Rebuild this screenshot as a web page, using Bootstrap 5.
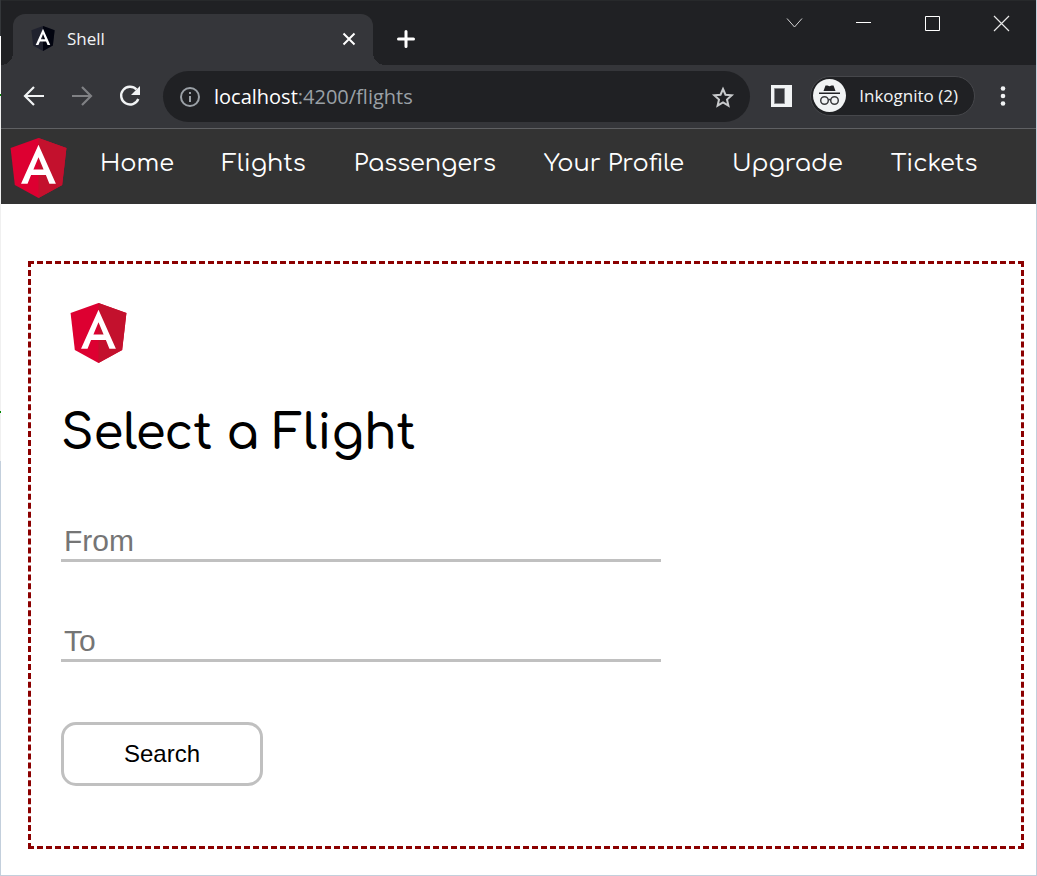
<!DOCTYPE html>
<html lang="en">
<head>
<meta charset="utf-8">
<meta name="viewport" content="width=device-width, initial-scale=1">
<title>Shell</title>
<link href="https://cdn.jsdelivr.net/npm/bootstrap@5.3.0/dist/css/bootstrap.min.css" rel="stylesheet">
<style>
  body { font-family: "Open Sans", sans-serif; background: #fff; color: #000; }
  svg { display: block; flex: none; }
  button { padding: 0; border: 0; background: none; color: #f1f3f4; }

  /* window frame: a thin edge all round, the desktop shows along the left side */
  .win {
    min-height: 100vh; padding: 0 1px 1px;
    background:
      linear-gradient(#34373a 36px, #fff 36px 94px, #080 94px 96px, #f0f0f0 96px 411px, #080 411px 413px, #f0f0f0 413px 461px, #c3cfdc 461px) left / 1px 100% no-repeat,
      #c3cfdc;
  }

  .tabstrip { height: 65px; background: #202124; border-top: 1px solid #27292b; padding-left: 12px; }
  .tab-shell { width: 360px; height: 51px; margin-top: 13px; padding: 0 17px 2px 18px; background: #35363a; border-radius: 12px 12px 0 0; color: #f1f3f4; font-size: 17px; line-height: 24px; }
  .tab-shell::before, .tab-shell::after { content: ""; position: absolute; bottom: 0; width: 12px; height: 12px; }
  .tab-shell::before { right: 100%; background: radial-gradient(circle at 0 0, #202124 12px, #35363a 12px); }
  .tab-shell::after { left: 100%; background: radial-gradient(circle at 100% 0, #202124 12px, #35363a 12px); }
  .new-tab { margin: 29px 0 0 24px; }
  .win-btns { gap: 48px; padding: 11px 24px 0 0; }

  .toolbar { height: 64px; background: #35363a; border-bottom: 1px solid #5f6063; padding: 0 27px 2px 21px; gap: 21px; }
  .history { gap: 24px; }
  .omnibox { height: 51px; border-radius: 26px; background: #202124; padding: 0 15px 0 16px; font-size: 20px; line-height: 28px; color: #fff; margin-top: 2px; }
  .omnibox label { margin-left: 13px; }
  .omnibox input { min-width: 0; padding: 0; border: 0; outline: 0; background: none; color: #9aa0a6; }
  .tools { gap: 18px; }
  .profile { height: 40px; border: 1px solid #46474b; border-radius: 20px; background: #202124; padding: 0 16px 0 2px; gap: 13px; font-size: 17px; line-height: 24px; }

  .site-nav { background: #333; min-height: 75px; }
  .site-links { font-family: "Comfortaa", "Noto Sans", sans-serif; font-size: 24px; line-height: 36px; gap: 48px; padding: 17px 0 0 24px; }
  .site-links a { color: #fff; text-decoration: none; white-space: nowrap; }

  .page { background: #fff; padding: 57px 12px 26px 27px; }
  .flight-box { border: 3px dashed #8b0000; padding: 30px 30px 60px; }
  .flight-box h1 { font-family: "Comfortaa", "Noto Sans", sans-serif; font-size: 48px; font-weight: 600; line-height: 64px; margin: 33px 0 56px; }
  .flight-box form { font-family: "Liberation Sans", sans-serif; gap: 60px; }
  .line-input { width: 600px; max-width: 100%; height: 40px; padding: 0 3px; border: 0; border-bottom: 3px solid #c0c0c0; border-radius: 0; outline: 0; font-size: 30px; line-height: 36px; }
  .line-input::placeholder { color: #757575; opacity: 1; }
  .search-btn { width: 202px; height: 64px; border: 3px solid #c0c0c0; border-radius: 15px; background: #fff; color: #000; font-size: 24px; line-height: 28px; }
</style>
</head>
<body>
<svg width="0" height="0" class="position-absolute" aria-hidden="true">
  <symbol id="shield-a" viewBox="0 0 250 250">
    <path fill="#fff" d="M125 52.1 66.8 182.6h21.7l11.7-29.2h49.4l11.7 29.2H183L125 52.1zm17 83.3h-34l17-40.9 17 40.9z"/>
  </symbol>
  <symbol id="angular" viewBox="0 0 250 250">
    <path fill="#dd0031" d="M125 30 31.9 63.2l14.2 123.1L125 230l78.9-43.7 14.2-123.1z"/>
    <path fill="#c3112d" d="M125 30v200l78.9-43.7 14.2-123.1z"/>
    <use href="#shield-a"/>
  </symbol>
</svg>

<div class="win d-flex flex-column">
  <header>
    <div class="tabstrip d-flex align-items-start">
      <div class="tab-shell position-relative d-flex align-items-center">
        <svg width="24" height="25" viewBox="31 30 188 200" aria-hidden="true"><path fill="#20222e" d="M125 30 31.9 63.2l14.2 123.1L125 230l78.9-43.7 14.2-123.1z"/><path fill="#02040f" d="M125 30v200l78.9-43.7 14.2-123.1z"/><path fill="#fff" d="M125 52.1 66.8 182.6h21.7l11.7-29.2h49.4l11.7 29.2H183L125 52.1zm17 83.3h-34l17-40.9 17 40.9z"/></svg>
        <span class="ms-2 ps-1 flex-grow-1">Shell</span>
        <button type="button" aria-label="Close tab"><svg width="14" height="14" viewBox="0 0 14 14" fill="none" stroke="#fff" stroke-width="2"><path d="m1.500 1.500 11 11m0-11-11 11"/></svg></button>
      </div>
      <button class="new-tab" type="button" aria-label="New tab"><svg width="18" height="18" viewBox="0 0 18 18" fill="none" stroke="#fff" stroke-width="3" stroke-linecap="round"><path d="M9 1.500v15M1.500 9h15"/></svg></button>
      <div class="win-btns d-flex ms-auto align-items-center">
        <button type="button" aria-label="Search tabs"><svg width="21" height="21" viewBox="0 0 21 21" fill="none" stroke="#d5d5d6"><path d="m3 6.500 7.500 8.500L18 6.500"/></svg></button>
        <button type="button" aria-label="Minimize"><svg width="21" height="21" viewBox="0 0 21 21" fill="none" stroke="#fff"><path d="M3 10.500h15"/></svg></button>
        <button type="button" aria-label="Maximize"><svg width="21" height="21" viewBox="0 0 21 21" fill="none" stroke="#fff"><path d="M3.500 4.500h14v14h-14z"/></svg></button>
        <button type="button" aria-label="Close"><svg width="21" height="21" viewBox="0 0 21 21" fill="none" stroke="#e8e8e8" stroke-width="1.200"><path d="m3 4 15 15M18 4 3 19"/></svg></button>
      </div>
    </div>

    <div class="toolbar d-flex align-items-center">
      <div class="history d-flex">
        <button type="button" aria-label="Back"><svg width="24" height="24" viewBox="0 0 24 24" fill="none" stroke="#f1f3f4" stroke-width="2.200"><path d="M22 12H3.500M12 3l-9 9 9 9"/></svg></button>
        <button type="button" aria-label="Forward"><svg width="24" height="24" viewBox="0 0 24 24" fill="none" stroke="#808184" stroke-width="2.200"><path d="M2 12h18.500M12 3l9 9-9 9"/></svg></button>
        <button type="button" aria-label="Reload"><svg width="24" height="24" viewBox="0 0 24 24"><path fill="none" stroke="#f1f3f4" stroke-width="2.400" d="M18.500 5.500A8.900 8.900 0 1 0 20.300 15"/><path fill="#f1f3f4" d="M22 2v9h-9z"/></svg></button>
      </div>
      <div class="omnibox d-flex align-items-center flex-grow-1">
        <svg width="22" height="22" viewBox="0 0 22 22" fill="none" stroke="#9aa0a6" stroke-width="2" aria-hidden="true"><circle cx="11" cy="11" r="9"/><path d="M11 10v6M11 6v2"/></svg>
        <label for="address">localhost</label>
        <input class="flex-grow-1" id="address" type="text" value=":4200/flights">
        <button type="button" aria-label="Bookmark this page"><svg width="24" height="24" viewBox="0 0 24 24" fill="none" stroke="#c8cacc" stroke-width="2"><path d="m12 4 2.500 5.700 6.200.6-4.700 4.200 1.400 6.100-5.400-3.200-5.400 3.200L8 14.500l-4.700-4.200 6.200-.6z"/></svg></button>
      </div>
      <div class="tools d-flex align-items-center">
        <button type="button" aria-label="Side panel"><svg width="21" height="22" viewBox="0 0 21 22"><path fill="#f1f3f4" d="M0 0h21v22H0z"/><path fill="#35363a" stroke="#85868a" d="M3.500 3.500h10v15h-10z"/></svg></button>
        <button class="profile d-flex align-items-center" type="button">
          <svg width="33" height="33" viewBox="0 0 33 33" aria-hidden="true"><circle cx="16.500" cy="16.500" r="16.500" fill="#f1f3f4"/><path fill="#202124" d="M6 13.500h21V15H6zM10.500 12l2-5.500h2l2 .7 2-.7h2l2 5.500z"/><g fill="none" stroke="#3c3d40" stroke-width="1.500"><circle cx="11.500" cy="21.500" r="3.800"/><circle cx="21.500" cy="21.500" r="3.800"/><path d="M15.300 21q1.200-1 2.400 0"/></g></svg>
          <span>Inkognito (2)</span>
        </button>
        <button class="ms-1" type="button" aria-label="Menu"><svg width="12" height="22" viewBox="0 0 12 22" fill="#f1f3f4"><circle cx="6" cy="3.500" r="2.300"/><circle cx="6" cy="11" r="2.300"/><circle cx="6" cy="18.500" r="2.300"/></svg></button>
      </div>
    </div>
  </header>

  <nav class="site-nav d-flex" aria-label="Main">
    <svg width="75" height="75" role="img" aria-label="Angular"><use href="#angular"/></svg>
    <div class="site-links d-flex">
      <a href="#home">Home</a>
      <a href="#flights">Flights</a>
      <a href="#passengers">Passengers</a>
      <a href="#profile">Your Profile</a>
      <a href="#upgrade">Upgrade</a>
      <a href="#tickets">Tickets</a>
    </div>
  </nav>

  <main class="page flex-grow-1">
    <section class="flight-box">
      <svg width="75" height="75" role="img" aria-label="Angular"><use href="#angular"/></svg>
      <h1>Select a Flight</h1>
      <form class="d-flex flex-column align-items-start">
        <input class="line-input" type="text" placeholder="From" aria-label="From">
        <input class="line-input" type="text" placeholder="To" aria-label="To">
        <button class="search-btn" type="button">Search</button>
      </form>
    </section>
  </main>
</div>
<script src="https://cdn.jsdelivr.net/npm/bootstrap@5.3.0/dist/js/bootstrap.bundle.min.js"></script>
</body>
</html>
